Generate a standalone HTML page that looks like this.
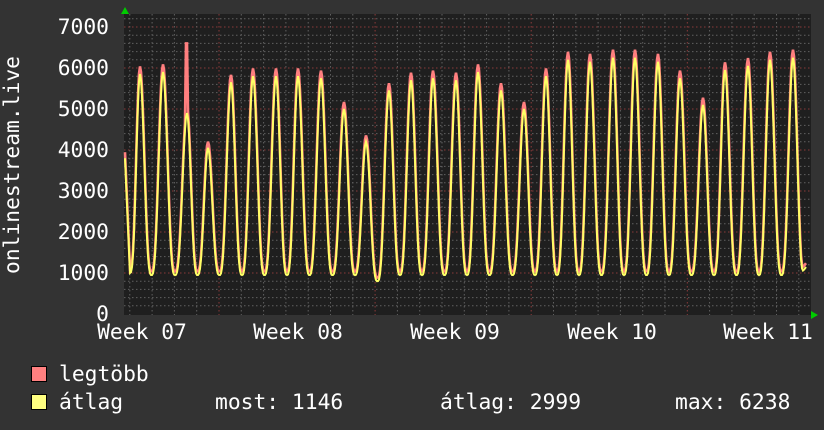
<!DOCTYPE html>
<html><head><meta charset="utf-8"><style>
html,body{margin:0;padding:0;background:#333;}
body{width:824px;height:430px;overflow:hidden;position:relative;}
svg{position:absolute;left:0;top:0;}
text{font-family:"DejaVu Sans Mono","Liberation Mono",monospace;font-size:21.3px;fill:#fff;}
</style></head><body>
<svg id="g" width="824" height="430" xmlns="http://www.w3.org/2000/svg">
<rect x="124" y="14" width="687" height="301" fill="#1f1f1f"/>
<g id="grid"></g>
<g id="data"></g>
<polygon points="121,14 129,14 125,7" fill="#0c0"/>
<polygon points="811,311 811,319 818,315" fill="#0c0"/>
<g text-anchor="end">
<text x="109" y="34">7000</text><text x="109" y="75">6000</text><text x="109" y="116">5000</text>
<text x="109" y="157">4000</text><text x="109" y="198">3000</text><text x="109" y="239">2000</text>
<text x="109" y="280">1000</text><text x="109" y="321">0</text>
</g>
<g text-anchor="middle">
<text x="142" y="339">Week 07</text><text x="298" y="339">Week 08</text><text x="455" y="339">Week 09</text>
<text x="612" y="339">Week 10</text><text x="768" y="339">Week 11</text>
</g>
<text transform="translate(19,274) rotate(-90)">onlinestream.live</text>
<rect x="31.5" y="366.5" width="15" height="15" fill="#ff8080" stroke="#000"/>
<rect x="31.5" y="394.5" width="15" height="15" fill="#ffff80" stroke="#000"/>
<text x="59" y="381">legtöbb</text>
<text x="59" y="409">átlag</text>
<text x="215" y="409">most: 1146</text>
<text x="440" y="409">átlag: 2999</text>
<text x="675" y="409">max: 6238</text>
</svg>
<script>
var ns="http://www.w3.org/2000/svg";
function el(t,a,p){var e=document.createElementNS(ns,t);for(var k in a)e.setAttribute(k,a[k]);p.appendChild(e);return e;}
var grid=document.getElementById('grid'),data=document.getElementById('data');
function Y(v){return 314-v*0.041;}
for(var v=200;v<=7200;v+=200){var y=Y(v);if(y<14)break;var maj=v%1000==0;
el('line',{x1:124,x2:811,y1:y,y2:y,stroke:maj?'#8a3a3a':'#606060','stroke-dasharray':'1.5,2.5','stroke-width':1},grid);}
for(var i=-4;i<40;i++){var x=219+i*22.3;if(x<126||x>810)continue;var maj=(i%7==0);
el('line',{x1:x,x2:x,y1:14,y2:315,stroke:maj?'#8a3a3a':'#606060','stroke-dasharray':'1.5,2.5','stroke-width':1},grid);}
var peaks=[[140,5850],[163,5900],[187,4900],[208,4050],[231,5650],[253,5800],[276,5800],[298,5800],[321,5750],[344,5000],[366,4200],[389,5450],[411,5700],[433,5750],[456,5700],[478,5900],[501,5450],[524,5000],[546,5800],[568,6200],[590,6150],[613,6250],[635,6250],[658,6150],[680,5750],[703,5100],[725,5950],[748,6050],[770,6200],[793,6250]];
function val(x){
 var i=0;while(i<peaks.length-1&&peaks[i+1][0]<x)i++;
 var p=peaks[i];var d=x-p[0];var per=22.4;
 if(d<0){
   if(x<=130){return 3800-(3800-1000)*(x-125)/5;}
   var t=(x-130)/10;var c=(1-Math.cos(Math.PI*t))/2;return 1000+(p[1]-1000)*Math.pow(c,1.5);}
 var q=peaks[i+1]||[p[0]+per,1146];var span=q[0]-p[0];
 var t=d/span;var min=950;if(x>370&&x<385)min=800;
 var ph=t<0.5?p[1]:q[1];
 var c=(1+Math.cos(2*Math.PI*t))/2;
 return min+(ph-min)*Math.pow(c,1.5);
}
var ya=[],ra=[];
for(var x=125;x<=806;x+=1){var v=val(x);if(x>=800)v=v+(1146-v)*(x-800)/6;
 ya.push(x+','+Y(v).toFixed(1));
 var r=v+(v-950)*0.02+90; if(x==187||x==186)r=6600;
 ra.push(x+','+Y(r).toFixed(1));}
el('polyline',{points:ra.join(' '),fill:'none',stroke:'#ff7f7f','stroke-width':2.6},data);
el('polyline',{points:ya.join(' '),fill:'none',stroke:'#ffff66','stroke-width':2},data);
</script>
</body></html>
